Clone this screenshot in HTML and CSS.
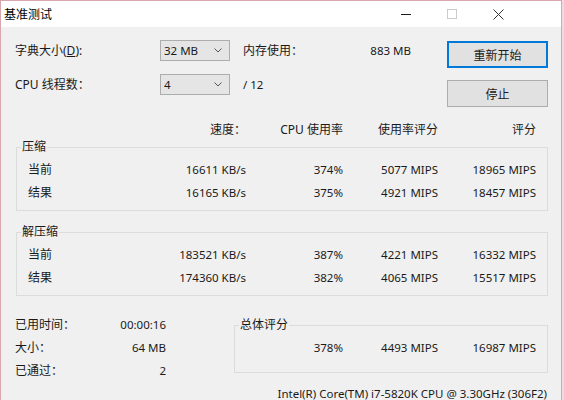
FILE: index.html
```html
<!DOCTYPE html>
<html lang="zh-CN">

<head>
    <meta charset="UTF-8" />
    <meta name="viewport" content="width=device-width, initial-scale=1.0">
    <title>基准测试</title>
    <link rel="stylesheet" href="styles.css">
</head>

<body>
    <div class="window">
        <div class="titlebar">
            <span class="title">基准测试</span>
            <div class="controls">
                <span class="ctl">
                    <svg width="10" height="10" viewBox="0 0 10 10"><path d="M0 5.5H10" stroke="#1a1a1a" stroke-width="1" /></svg>
                </span>
                <span class="ctl">
                    <svg width="10" height="10" viewBox="0 0 10 10"><rect x="0.5" y="0.5" width="9" height="9" fill="none" stroke="#cccccc" stroke-width="1" /></svg>
                </span>
                <span class="ctl">
                    <svg width="11" height="11" viewBox="0 0 11 11"><path d="M0.5 0.5L10.5 10.5M10.5 0.5L0.5 10.5" stroke="#333333" stroke-width="1" /></svg>
                </span>
            </div>
        </div>

        <div class="content">
            <div class="top">
                <div class="settings">
                    <span>字典大小(<u>D</u>):</span>
                    <div class="combo"><span class="lat">32 MB</span>
                        <svg width="8" height="5" viewBox="0 0 8 5"><path d="M0.5 0.5L4 4L7.5 0.5" fill="none" stroke="#555" stroke-width="1" /></svg>
                    </div>
                    <span></span>
                    <span>内存使用：</span>
                    <span class="num lat">883 MB</span>

                    <span>CPU 线程数：</span>
                    <div class="combo"><span class="lat">4</span>
                        <svg width="8" height="5" viewBox="0 0 8 5"><path d="M0.5 0.5L4 4L7.5 0.5" fill="none" stroke="#555" stroke-width="1" /></svg>
                    </div>
                    <span></span>
                    <span class="lat">/ 12</span>
                    <span></span>
                </div>
                <div class="buttons">
                    <button class="btn default">重新开始</button>
                    <button class="btn">停止</button>
                </div>
            </div>

            <div class="stats head">
                <span></span>
                <span class="num">速度：</span>
                <span class="num">CPU 使用率</span>
                <span class="num">使用率评分</span>
                <span class="num">评分</span>
            </div>

            <fieldset class="group">
                <legend>压缩</legend>
                <div class="stats">
                    <span>当前</span>
                    <span class="num lat">16611 KB/s</span>
                    <span class="num lat">374%</span>
                    <span class="num lat">5077 MIPS</span>
                    <span class="num lat">18965 MIPS</span>

                    <span>结果</span>
                    <span class="num lat">16165 KB/s</span>
                    <span class="num lat">375%</span>
                    <span class="num lat">4921 MIPS</span>
                    <span class="num lat">18457 MIPS</span>
                </div>
            </fieldset>

            <fieldset class="group second">
                <legend>解压缩</legend>
                <div class="stats">
                    <span>当前</span>
                    <span class="num lat">183521 KB/s</span>
                    <span class="num lat">387%</span>
                    <span class="num lat">4221 MIPS</span>
                    <span class="num lat">16332 MIPS</span>

                    <span>结果</span>
                    <span class="num lat">174360 KB/s</span>
                    <span class="num lat">382%</span>
                    <span class="num lat">4065 MIPS</span>
                    <span class="num lat">15517 MIPS</span>
                </div>
            </fieldset>

            <div class="bottom">
                <div class="info">
                    <span>已用时间：</span>
                    <span class="num lat">00:00:16</span>
                    <span>大小：</span>
                    <span class="num lat">64 MB</span>
                    <span>已通过：</span>
                    <span class="num lat">2</span>
                </div>

                <fieldset class="group total">
                    <legend>总体评分</legend>
                    <div class="stats short">
                        <span class="num lat">378%</span>
                        <span class="num lat">4493 MIPS</span>
                        <span class="num lat">16987 MIPS</span>
                    </div>
                </fieldset>
            </div>

            <div class="cpu lat">Intel(R) Core(TM) i7-5820K CPU @ 3.30GHz (306F2)</div>
        </div>
    </div>
</body>

</html>
```

FILE: styles.css
```css
body {
    margin: 0;
    background-color: #f3d9dd;
    font-family: "Noto Sans", "Noto Sans CJK SC", sans-serif;
    font-size: 12px;
    color: #1a1a1a;
}

.window {
    width: 562px;
    height: 400px;
    box-sizing: border-box;
    border: 1px solid #d7a6ae;
    border-bottom: none;
    background: #f0f0f0;
    overflow: hidden;
}

.titlebar {
    height: 26px;
    background: #ffffff;
    display: flex;
    align-items: center;
    padding-left: 3px;
}

.title {
    font-size: 12px;
    color: #000;
}

.controls {
    margin-left: auto;
    margin-right: 40px;
    display: flex;
}

.ctl {
    width: 46px;
    height: 26px;
    display: flex;
    align-items: center;
    justify-content: center;
}

.content {
    padding: 13px 14px 0 14px;
}

/* latin text is drawn a touch smaller, like the dialog's own font */
.lat {
    font-size: 11.5px;
}

.top {
    display: flex;
    align-items: flex-start;
}

.settings {
    display: grid;
    grid-template-columns: 145px 70px 13px 72px 96px;
    grid-auto-rows: 21px;
    row-gap: 13px;
    align-items: center;
    line-height: 16px;
}

.num {
    text-align: right;
}

.combo {
    height: 21px;
    box-sizing: border-box;
    background: #e5e5e5;
    border: 1px solid #adadad;
    padding-left: 3px;
    padding-right: 7px;
    display: flex;
    align-items: center;
    justify-content: space-between;
}

.buttons {
    margin-left: 36px;
    margin-top: 1px;
    display: flex;
    flex-direction: column;
    gap: 12px;
}

.btn {
    width: 101px;
    height: 27px;
    box-sizing: border-box;
    background: #e1e1e1;
    border: 1px solid #adadad;
    font-family: inherit;
    font-size: 12px;
    color: #1a1a1a;
    padding: 0;
}

.btn.default {
    border: 2px solid #0078d7;
}

.stats {
    display: grid;
    grid-template-columns: 130px 88px 97px 95px 98px;
    grid-auto-rows: 23px;
    align-items: center;
    line-height: 16px;
}

.stats.head {
    margin-top: 14px;
    padding-left: 13px;
    grid-auto-rows: 18px;
}

.group {
    margin: 0 0 0 1px;
    width: 508px;
    padding: 3px 11px 6px 11px;
    border: 1px solid #dcdcdc;
}

.group legend {
    padding: 0 1px;
    margin-left: -7px;
    line-height: 16px;
}

.group.second {
    margin-top: 13px;
}

.bottom {
    margin-top: 17px;
    display: flex;
    align-items: flex-start;
}

.info {
    display: grid;
    grid-template-columns: 80px 71px;
    grid-auto-rows: 23px;
    align-items: center;
    line-height: 16px;
}

.group.total {
    margin: 4px 0 0 68px;
    width: 290px;
    padding-bottom: 13px;
}

.stats.short {
    grid-template-columns: 97px 95px 98px;
}

.cpu {
    margin-top: 3px;
    text-align: right;
    line-height: 18px;
}
```
